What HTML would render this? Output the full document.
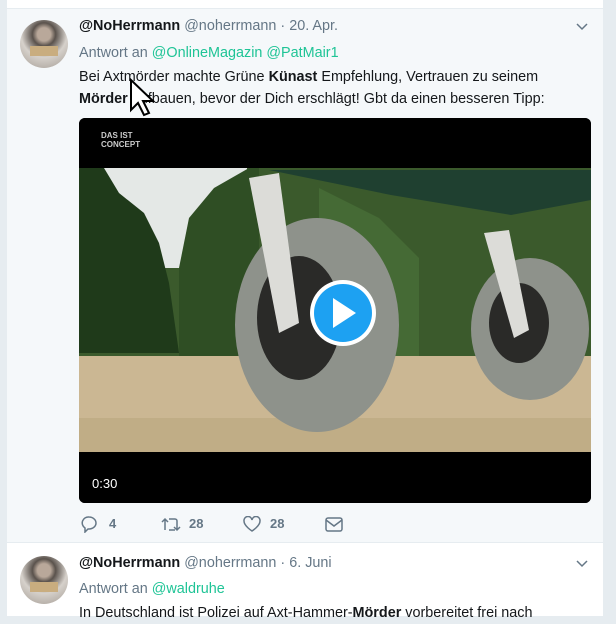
<!DOCTYPE html>
<html><head><meta charset="utf-8"><style>
*{margin:0;padding:0;box-sizing:border-box}
body{width:616px;height:616px;overflow:hidden;background:#e6ecf0;font-family:"Liberation Sans",Arial,sans-serif;font-size:14.4px;color:#14171a;position:relative}
.card{position:absolute;left:7px;top:0;width:596px;height:616px;background:#fff}
.t1{position:absolute;left:7px;top:8px;width:596px;height:535px;background:#f5f8fa;border-top:1px solid #e6ecf0;border-bottom:1px solid #e6ecf0}
.av{position:absolute;left:20px;width:48px;height:48px;border-radius:50%;overflow:hidden;background:radial-gradient(circle at 50% 30%,#b9a89a 0 16%,#5a524c 28%,#d6d1cb 55%,#a39b93)}
.av:after{content:"";position:absolute;left:10px;top:26px;width:28px;height:10px;background:#c9ad7f}
.hdr{position:absolute;left:79px;font-size:14.4px;white-space:nowrap}
.hdr b{color:#14171a}
.g{color:#657786}
.a{color:#1fc496}
.txt{position:absolute;left:79px;font-size:14.4px;line-height:22px;white-space:nowrap}
.chev{position:absolute;left:576px;width:12px;height:8px}
.video{position:absolute;left:79px;top:118px;width:512px;height:385px;border-radius:6px;overflow:hidden;background:#000}
.acts{position:absolute;top:516px;font-size:13px;color:#657786;font-weight:bold}
</style></head><body>
<div class="card"></div>
<div class="t1"></div>
<div class="av" style="top:20px"></div>
<div class="hdr" style="top:18px"><b>@NoHerrmann</b> <span class="g">@noherrmann · 20. Apr.</span></div>
<svg class="chev" style="top:23px" viewBox="0 0 12 8"><path d="M1 1l5 5 5-5" fill="none" stroke="#657786" stroke-width="1.5"/></svg>
<div class="txt" style="top:42px"><span class="g">Antwort an </span><span class="a">@OnlineMagazin @PatMair1</span></div>
<div class="txt" style="top:66px">Bei Axtmörder machte Grüne <b>Künast</b> Empfehlung, Vertrauen zu seinem</div>
<div class="txt" style="top:88px"><b>Mörder</b> aufbauen, bevor der Dich erschlägt! Gbt da einen besseren Tipp:</div>
<svg style="position:absolute;left:128px;top:78px" width="30" height="40" viewBox="0 0 30 40"><path d="M3 2v30l7-7 6 12 5-2-6-12h10z" fill="#fff" stroke="#000" stroke-width="2"/></svg>
<div class="video">
<svg width="512" height="385" viewBox="0 0 512 385">
<rect width="512" height="385" fill="#000"/>
<rect y="50" width="512" height="190" fill="#3b5a2c"/>
<rect x="23" y="50" width="145" height="100" fill="#e4e8e6"/>
<path d="M0 50h25l15 25 25 20 15 30 10 40 10 70H0z" fill="#1f3a1a"/>
<path d="M100 150l10-50 25-30 35-20h10v190H100z" fill="#2f4e24"/>
<path d="M240 70l60 30 40 40 0 100H240z" fill="#456a35"/>
<rect y="238" width="512" height="96" fill="#cbb793"/>
<rect y="300" width="512" height="34" fill="#c0ad86"/>
<path d="M190 52h322v30l-80 15-120-20z" fill="#1f4030"/>
<ellipse cx="238" cy="207" rx="82" ry="107" fill="#8e928b"/>
<ellipse cx="220" cy="200" rx="42" ry="62" fill="#2a2a28"/>
<path d="M170 60l30-5 20 150-20 10z" fill="#dcdcd8"/>
<ellipse cx="451" cy="211" rx="59" ry="71" fill="#8e928b"/>
<ellipse cx="440" cy="205" rx="30" ry="40" fill="#2a2a28"/>
<path d="M405 115l25-3 20 100-15 8z" fill="#dcdcd8"/>
<text x="22" y="20" fill="#ccc" font-size="8" font-weight="bold" font-family="Liberation Sans">DAS IST</text>
<text x="22" y="29" fill="#ccc" font-size="8" font-weight="bold" font-family="Liberation Sans">CONCEPT</text>
<circle cx="264" cy="195" r="33" fill="#fff"/>
<circle cx="264" cy="195" r="29" fill="#1da1f2"/>
<path d="M254 180v30l23-15z" fill="#fff"/>
<text x="13" y="370" fill="#fff" font-size="13" font-family="Liberation Sans">0:30</text>
</svg>
</div>
<svg style="position:absolute;left:81px;top:515px" width="18" height="18" viewBox="0 0 18 18"><path d="M8 2a7 6 0 1 1 0 12h-1l-3 3v-4A6 6 0 0 1 8 2z" fill="none" stroke="#657786" stroke-width="1.5"/></svg>
<div class="acts" style="left:109px">4</div>
<svg style="position:absolute;left:161px;top:516px" width="22" height="16" viewBox="0 0 22 16"><path d="M4 14V3M1 6l3-3 3 3M8 3h6a2 2 0 0 1 2 2v9M13 11l3 3 3-3M14 14H8" fill="none" stroke="#657786" stroke-width="1.5"/></svg>
<div class="acts" style="left:189px">28</div>
<svg style="position:absolute;left:243px;top:516px" width="18" height="16" viewBox="0 0 18 16"><path d="M9 15S1 10 1 5a4 4 0 0 1 8-1 4 4 0 0 1 8 1c0 5-8 10-8 10z" fill="none" stroke="#657786" stroke-width="1.5"/></svg>
<div class="acts" style="left:270px">28</div>
<svg style="position:absolute;left:325px;top:517px" width="18" height="15" viewBox="0 0 18 15"><rect x="1" y="1" width="16" height="13" rx="2" fill="none" stroke="#657786" stroke-width="1.5"/><path d="M1 3l8 6 8-6" fill="none" stroke="#657786" stroke-width="1.5"/></svg>
<div class="av" style="top:556px"></div>
<div class="hdr" style="top:555px"><b>@NoHerrmann</b> <span class="g">@noherrmann · 6. Juni</span></div>
<svg class="chev" style="top:560px" viewBox="0 0 12 8"><path d="M1 1l5 5 5-5" fill="none" stroke="#657786" stroke-width="1.5"/></svg>
<div class="txt" style="top:578px"><span class="g">Antwort an </span><span class="a">@waldruhe</span></div>
<div class="txt" style="top:602px">In Deutschland ist Polizei auf Axt-Hammer-<b>Mörder</b> vorbereitet frei nach</div>
</body></html>
